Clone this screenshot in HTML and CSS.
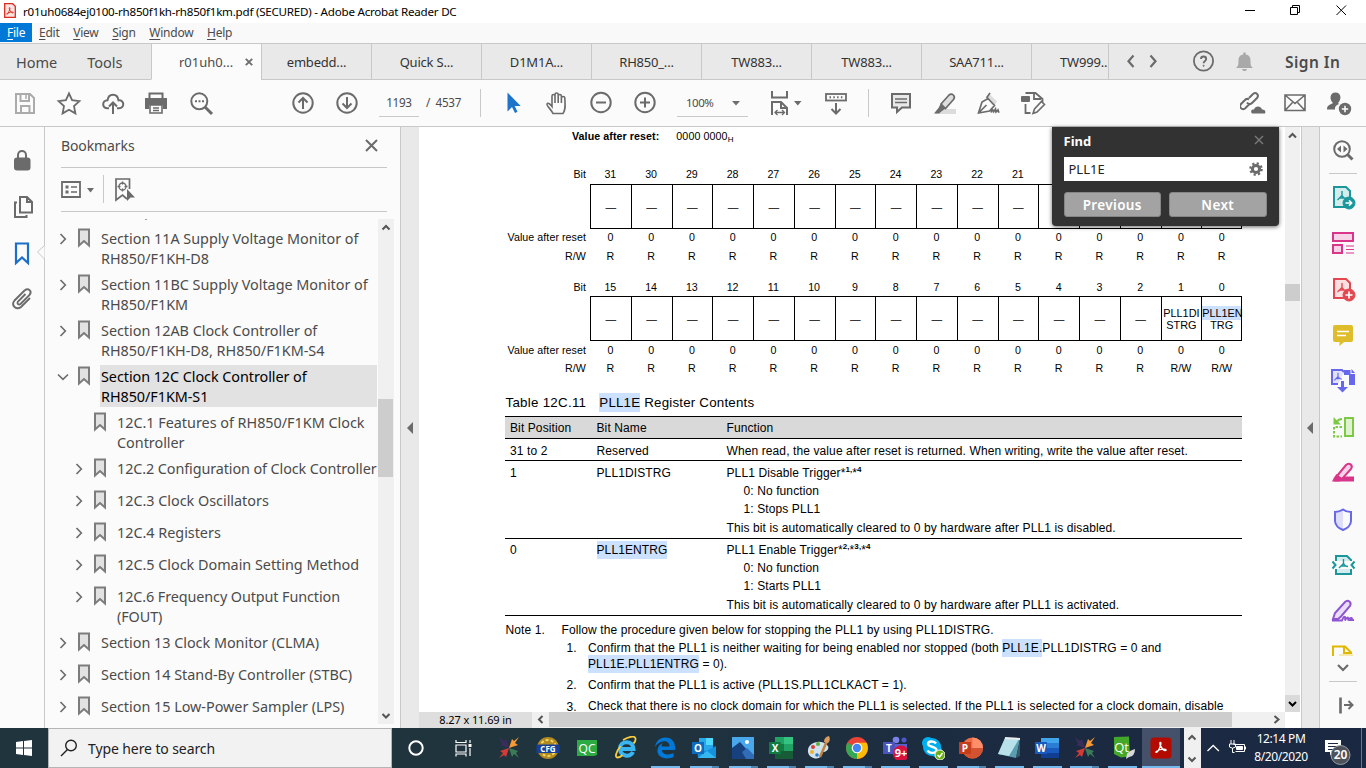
FILE: index.html
```html
<!DOCTYPE html>
<html lang="en">
<head>
<meta charset="utf-8">
<title>r01uh0684ej0100-rh850f1kh-rh850f1km.pdf (SECURED) - Adobe Acrobat Reader DC</title>
<link rel="stylesheet" href="styles.css">
</head>
<body>
<svg class="defs" width="0" height="0">
  <symbol id="mark" viewBox="0 0 14 20"><path d="M2 1.500h10v16l-5-4.500-5 4.500z" fill="#e2e2e2" stroke="#7c7c7c" stroke-width="2"/></symbol>
  <symbol id="right" viewBox="0 0 10 14"><path d="M2.500 2l4.800 5-4.800 5" fill="none" stroke="#6e6e6e" stroke-width="1.700"/></symbol>
  <symbol id="tri" viewBox="0 0 8 5"><path d="M0 0h8l-4 4.500z" fill="#6e6e6e"/></symbol>
  <symbol id="acro" viewBox="0 0 16 16"><path d="M7.500 2.500c-.9 0-.9 2 .1 4s3 4.500 5 4.700c1.300 0 1.300-1.500-1.600-1.500S4.500 11 3 12.300c-1 1.200.7 1.600 2.200-1.100S8.800 3 7.500 2.500z" fill="none" stroke="currentColor" stroke-width="1.500"/></symbol>
  <symbol id="tree3" viewBox="0 0 12 12"><path d="M6 1v4.500L1.500 10M6 5.500c1 2 2.500 3 4.500 3M3.500 8h4" fill="none" stroke="currentColor" stroke-width="1.400"/></symbol>
  <symbol id="burst" viewBox="0 0 24 24"><path d="M2 1l5 4 2-2 3 9-9-3 2-1z" fill="#3a2d5c"/><path d="M22 1l-4 6 3 2-9 3 3-9 2 2z" fill="#f79a35"/><path d="M2 22l4-5-3-2 9-3-3 9-2-2z" fill="#d33b35"/><path d="M22 22l-5-4-2 3-3-9 9 3-2 2z" fill="#3c7a58"/></symbol>
</svg>
<div class="app">
  <header class="titlebar">
    <svg class="app-ico" width="12" height="15" viewBox="0 0 12 15"><path d="M.7.700h8l2.600 2.600v11H.7z" fill="#fbe3e0" stroke="#d92b1e" stroke-width="1.300"/><svg x="1" y="3" width="10" height="10" viewBox="0 0 16 16"><use href="#acro" color="#d92b1e"/></svg></svg>
    <span class="title">r01uh0684ej0100-rh850f1kh-rh850f1km.pdf (SECURED) - Adobe Acrobat Reader DC</span>
    <svg class="winbtns" width="110" height="20" viewBox="0 0 110 20" fill="none" stroke="#000"><path d="M4 10.500h10M49.500 7.500h7v7h-7zM51.500 7.500v-2h7v7h-2M95.500 5.500l9.500 9.500M105 5.500L95.500 15"/></svg>
  </header>
  <nav class="menubar"><span class="on"><u>F</u>ile</span><span><u>E</u>dit</span><span><u>V</u>iew</span><span><u>S</u>ign</span><span><u>W</u>indow</span><span><u>H</u>elp</span></nav>
  <div class="tabs">
    <div class="tab-home"><span>Home</span><span>Tools</span></div>
    <div class="tab cur">r01uh0...<svg class="tab-x" width="8" height="8" viewBox="0 0 8 8"><path d="M.8.800l6.400 6.400M7.200.800L.8 7.200" stroke="#6e6e6e" stroke-width="1.900"/></svg></div>
    <div class="tab">embedd...</div><div class="tab">Quick S...</div><div class="tab">D1M1A...</div><div class="tab">RH850_...</div><div class="tab">TW883...</div><div class="tab">TW883...</div><div class="tab">SAA711...</div><div class="tab last">TW999...</div>
    <div class="tab-right">
      <svg width="146" height="34" viewBox="1109 44 146 34" fill="none" stroke="#6b6b6b" stroke-width="2.200"><path d="M1133.500 55.500l-5 5.700 5 5.700M1150.500 55.500l5 5.700-5 5.700"/><circle cx="1203.500" cy="61" r="9.600" stroke-width="1.800"/><path d="M1201 59c0-3.300 5.200-3.300 5.200 0 0 2-2.600 1.800-2.600 4.200" stroke-width="1.900"/><circle cx="1203.600" cy="65.800" r=".6" stroke-width="1"/><path d="M1236 68c2.500-2 2.500-4 2.500-7.500 0-4 2-5.500 4.800-6v-2h2.400v2c2.800.5 4.800 2 4.800 6 0 3.500 0 5.500 2.500 7.500zM1242 69h5c-.5 2.700-4.500 2.700-5 0z" fill="#a9a9a9" stroke="none"/></svg>
      <span class="signin">Sign In</span>
    </div>
  </div>
  <div class="toolbar">
    <svg class="tb1" width="380" height="46" viewBox="0 80 380 46" fill="none" stroke="#6b6b6b" stroke-width="2">
      <path d="M16 94h14l4 4v15H16zM20.500 94v7h8.500v-7M21 113v-7h8.500v7" stroke="#ababab"/><path d="M26 94.500v4.500" stroke="#ababab" stroke-width="1.500"/>
      <path d="M69 93.500l3.100 6.700 7.300.9-5.400 5 1.400 7.300-6.400-3.600-6.400 3.600 1.400-7.300-5.400-5 7.300-.9z" stroke-width="1.800"/>
      <path d="M109 108.300h-1.500c-6 0-5.500-8 0-8 1-7.500 10-7.500 11 0 6-1 6.500 8 .5 8H117M113 114v-11M109 106.500l4-4 4 4"/>
      <path d="M149.500 98v-4.500h13V98"/><path d="M145 98h22v11h-4v-4h-14v4h-4z" fill="#6b6b6b" stroke="none"/><path d="M150 105h12v8h-12zM153 108h6M153 110.500h6" stroke-width="1.600"/>
      <circle cx="199.300" cy="101.300" r="8" stroke-width="2"/><path d="M205 107l7 7" stroke-width="3"/><path d="M195 101.200h2M198.500 101.200h2M202 101.200h2"/>
      <circle cx="303" cy="103" r="9.700"/><path d="M303 109V98.500M298.500 102.500l4.500-4.500 4.500 4.500"/>
      <circle cx="347" cy="103" r="9.700"/><path d="M347 97v10.500M342.500 103.500l4.500 4.500 4.500-4.500"/>
    </svg>
    <div class="pageno"><span class="pn">1193</span><span class="pslash">/&nbsp; 4537</span></div>
    <svg class="tb2" width="189" height="46" viewBox="474 80 189 46" fill="none" stroke="#6b6b6b" stroke-width="2">
      <path d="M480.500 89v28" stroke="#c9c9c9" stroke-width="1"/>
      <path d="M507.500 92.500v19l4.500-4.500 3 6 2.500-1.300-2.800-5.700h6z" fill="#1d74c9" stroke="none"/>
      <path d="M553 113.500c-1-3-6.500-7.500-6-9.500 1-2 3.500.5 5 2.500v-10.500c0-2 3-2 3 0v-1.500c0-2 3.200-2 3.200 0V96c0-2 3.200-2 3.200 0v2c0-2 3.400-2 3.400 0 .4 7.500 1 12-1.800 15.500zM555 96v7M558.200 95v8M561.400 97v6" stroke-width="1.600"/>
      <circle cx="601" cy="102.500" r="9.700"/><path d="M596 102.500h10"/>
      <circle cx="645" cy="102.500" r="9.700"/><path d="M640 102.500h10M645 97.500v10"/>
    </svg>
    <div class="zoom"><span>100%</span><svg width="8" height="5"><use href="#tri"/></svg></div>
    <svg class="tb3" width="300" height="46" viewBox="760 80 300 46" fill="none" stroke="#6b6b6b" stroke-width="2">
      <path d="M772 91v6.500h15V91M772 115v-13h9l6 6v7M781 102v6h6"/><path d="M775 112.500h9M777.500 110l-2.500 2.500 2.500 2.500M782 110l2.500 2.500-2.500 2.500" stroke-width="1.300"/>
      <path d="M794 101h7.500l-3.700 4.500z" fill="#6b6b6b" stroke="none"/>
      <rect x="826" y="94" width="20" height="6.500" stroke-width="1.800"/><path d="M829.500 97.300h13" stroke-dasharray="1.500 2.300"/><path d="M836 103v9.500M831.500 109l4.500 4.500 4.500-4.500"/>
      <path d="M868.500 89v28" stroke="#c9c9c9" stroke-width="1"/>
      <path d="M892 94h18v13.500h-8l-5 4.500v-4.500h-5z" fill="#e8e8e8"/><path d="M895 99h12M895 102.500h12" stroke-width="1.300"/>
      <path d="M939 109h17v5h-20z" fill="#dcdcdc" stroke="none"/><path d="M941 104l8-9c3-2.500 7 1 4.500 4.500l-8 9z" fill="#dedede" stroke-width="1.700"/><path d="M940.500 104l5 4.500-3.500 2.500-3 2.500h-5l2-2.500 2.500-3z" fill="#6b6b6b" stroke="none"/>
      <path d="M987 98.500l3-4 7 7-2.500 4z" fill="#dedede" stroke="none"/><path d="M978.500 113l3.500-11 6-3.500 6.500 7-5 5.500zM978.500 113l8-8M986.500 98l3.500-5M991 112.500c2-6 2-1 2.500-.5l2-3 .5 3 2-2 .5 2h1" stroke-width="1.700"/>
      <path d="M1025.500 93h10l7 6v3M1034 93v6h7M1025.500 104v9h5" stroke-width="1.800"/><rect x="1021" y="96" width="9" height="6" rx="1" fill="#6b6b6b" stroke="none"/><path d="M1033 113.500l1.500-4.500 7-7.500 3 3-7.500 7.500z" stroke-width="1.600"/>
    </svg>
    <svg class="tb4" width="126" height="46" viewBox="1240 80 126 46" fill="none" stroke="#6b6b6b" stroke-width="2">
      <path d="M1249 98l4-4c3-2.500 6.500 1 4 4l-5 5c-2 2-4 1-5-.500M1249 99.500c-1.500-1-3-.5-4 .5l-4 4c-2.500 3 1 6.500 4 4.500l4-4"/><path d="M1252 113.500c-2-3 0-4.500 2-4 1-4 7-4 8 0 3-.5 4 2 3 4z" fill="#6b6b6b" stroke="none"/>
      <path d="M1285 95h20v15.500h-20zM1285 95l10 8.500 10-8.500M1285 110.500l7.500-8M1305 110.500l-7.500-8" stroke-width="1.600"/>
      <path d="M1327 109.500c0-5 4-5 6-6.500-4-4-3-10.500 2.500-10.500s6.500 6.500 2.500 10.500l1 1c-3 1-4.500 3-4 5.500z" fill="#6b6b6b" stroke="none"/><circle cx="1345" cy="109" r="6.200" fill="#6b6b6b" stroke="none"/><path d="M1341.800 109h6.400M1345 105.800v6.400" stroke="#fff" stroke-width="1.500"/>
    </svg>
  </div>
  <main class="main">
    <aside class="rail">
      <svg width="51" height="200" viewBox="0 127 51 200" fill="none" stroke="#6b6b6b" stroke-width="2">
        <path d="M18 159v-4c0-5.500 8-5.500 8 0v4"/><rect x="14" y="157.500" width="16.500" height="13" rx="3" fill="#6b6b6b" stroke="none"/>
        <path d="M20 197h7l5 5v10.500H20zM27 197v5h5M17 202.500h-2V217h11.500v-2"/>
        <path d="M16 243.500h12v19.500l-6-5.500-6 5.500z" stroke="#1c6fc8" stroke-width="2.200"/>
        <path d="M44.500 245.500l-7 6.500 7 7" fill="#fbfbfb" stroke="#c8c8c8" stroke-width="1"/>
        <path d="M25.500 294l-7.500 7.500c-1.500 2 .500 4 2.500 2.500l9-9c3-4-1-7.500-5-4.500l-10 10c-4 5 2 10 6.500 6.500l9-9" stroke-width="1.900"/>
      </svg>
    </aside>
    <section class="bookmarks">
      <div class="bm-head"><span>Bookmarks</span><svg width="13" height="13" viewBox="0 0 13 13"><path d="M1 1l11 11M12 1L1 12" stroke="#6b6b6b" stroke-width="2"/></svg></div>
      <div class="bm-tools">
        <svg width="76" height="40" viewBox="61 168 76 40" fill="none" stroke="#6b6b6b" stroke-width="2"><path d="M62 182h18v15H62z" stroke-width="1.800"/><path d="M65.500 187h3M65.500 192h3" stroke-width="3"/><path d="M71 187h6M71 192h6" stroke-width="1.700"/><path d="M87 188h7l-3.500 4.500z" fill="#6b6b6b" stroke="none"/><path d="M103.500 175v28" stroke="#c9c9c9" stroke-width="1"/><path d="M127 199l-4.500-4-6.500 5v-21h13.500v10" stroke-width="1.700"/><circle cx="122.500" cy="186.500" r="3.500" stroke-width="1.300"/><path d="M122.500 181.500v3M122.500 188.500v3M117.500 186.500h3M124.500 186.500h3" stroke-width="1.300"/><path d="M127 189v12l3.500-3.500h4.500z" fill="#6b6b6b" stroke="none"/></svg>
      </div>
      <div class="bm-body">
        <div class="tree">
          <i class="speck"></i>
          <div class="node"><svg class="ar"><use href="#right"/></svg><svg class="mk"><use href="#mark"/></svg><p>Section 11A Supply Voltage Monitor of<br>RH850/F1KH-D8</p></div>
          <div class="node"><svg class="ar"><use href="#right"/></svg><svg class="mk"><use href="#mark"/></svg><p>Section 11BC Supply Voltage Monitor of<br>RH850/F1KM</p></div>
          <div class="node"><svg class="ar"><use href="#right"/></svg><svg class="mk"><use href="#mark"/></svg><p>Section 12AB Clock Controller of<br>RH850/F1KH-D8, RH850/F1KM-S4</p></div>
          <div class="node sel"><svg class="ar down"><use href="#right"/></svg><svg class="mk"><use href="#mark"/></svg><p>Section 12C Clock Controller of<br>RH850/F1KM-S1</p></div>
          <div class="node sub"><svg class="ar"></svg><svg class="mk"><use href="#mark"/></svg><p>12C.1 Features of RH850/F1KM Clock<br>Controller</p></div>
          <div class="node sub"><svg class="ar"><use href="#right"/></svg><svg class="mk"><use href="#mark"/></svg><p class="tight">12C.2 Configuration of Clock Controller</p></div>
          <div class="node sub"><svg class="ar"><use href="#right"/></svg><svg class="mk"><use href="#mark"/></svg><p>12C.3 Clock Oscillators</p></div>
          <div class="node sub"><svg class="ar"><use href="#right"/></svg><svg class="mk"><use href="#mark"/></svg><p>12C.4 Registers</p></div>
          <div class="node sub"><svg class="ar"><use href="#right"/></svg><svg class="mk"><use href="#mark"/></svg><p>12C.5 Clock Domain Setting Method</p></div>
          <div class="node sub"><svg class="ar"><use href="#right"/></svg><svg class="mk"><use href="#mark"/></svg><p class="tight">12C.6 Frequency Output Function<br>(FOUT)</p></div>
          <div class="node"><svg class="ar"><use href="#right"/></svg><svg class="mk"><use href="#mark"/></svg><p>Section 13 Clock Monitor (CLMA)</p></div>
          <div class="node"><svg class="ar"><use href="#right"/></svg><svg class="mk"><use href="#mark"/></svg><p>Section 14 Stand-By Controller (STBC)</p></div>
          <div class="node"><svg class="ar"><use href="#right"/></svg><svg class="mk"><use href="#mark"/></svg><p>Section 15 Low-Power Sampler (LPS)</p></div>
        </div>
        <div class="bm-scroll"><svg width="16" height="16"><path d="M4.500 10.500L8 7l3.500 3.500" class="sa"/></svg><i class="bm-thumb"></i><svg width="16" height="16"><path d="M4.500 6L8 9.500 11.500 6" class="sa"/></svg></div>
      </div>
    </section>
    <div class="split"><svg width="6" height="12"><path d="M6 0v12L0 6z" fill="#6b6b6b"/></svg></div>
    <section class="docwrap">
      <div class="docrow">
        <div class="doc">
          <div class="reset"><b>Value after reset:</b><span>0000 0000<small>H</small></span></div>
          <div class="bits num"><em>Bit</em><span>31</span><span>30</span><span>29</span><span>28</span><span>27</span><span>26</span><span>25</span><span>24</span><span>23</span><span>22</span><span>21</span></div>
          <div class="bits box"><em></em><span>—</span><span>—</span><span>—</span><span>—</span><span>—</span><span>—</span><span>—</span><span>—</span><span>—</span><span>—</span><span>—</span><span></span><span></span><span></span><span></span><span></span></div>
          <div class="bits val"><em>Value after reset</em><span>0</span><span>0</span><span>0</span><span>0</span><span>0</span><span>0</span><span>0</span><span>0</span><span>0</span><span>0</span><span>0</span><span>0</span><span>0</span><span>0</span><span>0</span><span>0</span></div>
          <div class="bits rw"><em>R/W</em><span>R</span><span>R</span><span>R</span><span>R</span><span>R</span><span>R</span><span>R</span><span>R</span><span>R</span><span>R</span><span>R</span><span>R</span><span>R</span><span>R</span><span>R</span><span>R</span></div>
          <div class="bits num two"><em>Bit</em><span>15</span><span>14</span><span>13</span><span>12</span><span>11</span><span>10</span><span>9</span><span>8</span><span>7</span><span>6</span><span>5</span><span>4</span><span>3</span><span>2</span><span>1</span><span>0</span></div>
          <div class="bits box"><em></em><span>—</span><span>—</span><span>—</span><span>—</span><span>—</span><span>—</span><span>—</span><span>—</span><span>—</span><span>—</span><span>—</span><span>—</span><span>—</span><span>—</span><span class="nm"><i>PLL1DI</i><i>STRG</i></span><span class="nm"><i class="hl">PLL1EN</i><i>TRG</i></span></div>
          <div class="bits val two"><em>Value after reset</em><span>0</span><span>0</span><span>0</span><span>0</span><span>0</span><span>0</span><span>0</span><span>0</span><span>0</span><span>0</span><span>0</span><span>0</span><span>0</span><span>0</span><span>0</span><span>0</span></div>
          <div class="bits rw two"><em>R/W</em><span>R</span><span>R</span><span>R</span><span>R</span><span>R</span><span>R</span><span>R</span><span>R</span><span>R</span><span>R</span><span>R</span><span>R</span><span>R</span><span>R</span><span>R/W</span><span>R/W</span></div>
          <h2 class="caption"><span>Table 12C.11</span><span><mark>PLL1E</mark> Register Contents</span></h2>
          <div class="reg">
            <div class="r head"><span>Bit Position</span><span>Bit Name</span><span>Function</span></div>
            <div class="r one"><span>31 to 2</span><span>Reserved</span><span>When read, the value after reset is returned. When writing, write the value after reset.</span></div>
            <div class="r big"><span>1</span><span>PLL1DISTRG</span><div><p>PLL1 Disable Trigger*<sup>1</sup><sup>,</sup>*<sup>4</sup></p><p class="in">0: No function</p><p class="in">1: Stops PLL1</p><p class="end">This bit is automatically cleared to 0 by hardware after PLL1 is disabled.</p></div></div>
            <div class="r big last"><span>0</span><span><mark class="name">PLL1ENTRG</mark></span><div><p>PLL1 Enable Trigger*<sup>2,</sup>*<sup>3,</sup>*<sup>4</sup></p><p class="in">0: No function</p><p class="in">1: Starts PLL1</p><p class="end">This bit is automatically cleared to 0 by hardware after PLL1 is activated.</p></div></div>
          </div>
          <div class="notes">
            <div class="nt"><span>Note 1.</span><span>Follow the procedure given below for stopping the PLL1 by using PLL1DISTRG.</span></div>
            <div class="st"><span>1.</span><p>Confirm that the PLL1 is neither waiting for being enabled nor stopped (both <mark>PLL1E.</mark>PLL1DISTRG = 0 and<br><mark>PLL1E.PLL1ENTRG</mark> = 0).</p></div>
            <div class="st"><span>2.</span><p>Confirm that the PLL1 is active (PLL1S.PLL1CLKACT = 1).</p></div>
            <div class="st"><span class="lo">3.</span><p>Check that there is no clock domain for which the PLL1 is selected. If the PLL1 is selected for a clock domain, disable</p></div>
          </div>
        </div>
        <div class="vscroll"><svg width="15" height="17"><path d="M4 10.500L7.500 7l3.500 3.500" class="sa"/></svg><i class="vthumb"></i><svg class="dn" width="15" height="17"><path d="M4 7l3.500 3.500L11 7" class="sa dark"/></svg></div>
      </div>
      <div class="hscroll"><span class="size">8.27 x 11.69 in</span><svg width="17" height="15"><path d="M10.500 4L7 7.500l3.500 3.500" class="sa"/></svg><i class="hthumb"></i><svg class="hr" width="17" height="15"><path d="M6.500 4l4 3.500-4 3.500" class="sa"/></svg></div>
      <div class="find">
        <div class="f-top"><b>Find</b><svg width="10" height="10" viewBox="0 0 10 10"><path d="M1 1l8 8M9 1L1 9" stroke="#777" stroke-width="1.500"/></svg></div>
        <div class="f-in"><span>PLL1E</span><svg width="14" height="14" viewBox="0 0 14 14" fill="none" stroke="#6b6b6b"><circle cx="7" cy="7" r="3.600" stroke-width="3"/><circle cx="7" cy="7" r="5.700" stroke-width="2.200" stroke-dasharray="2.200 2.270"/></svg></div>
        <div class="f-btns"><span>Previous</span><span>Next</span></div>
      </div>
    </section>
    <div class="split right"><svg width="6" height="12"><path d="M6 0v12L0 6z" fill="#6b6b6b"/></svg></div>
    <aside class="tools">
      <svg width="46" height="601" viewBox="1320 127 46 601" fill="none" stroke-width="2">
        <g stroke="#6b6b6b"><circle cx="1342" cy="149" r="7.800"/><path d="M1347.500 154.500l5 5" stroke-width="3"/><path d="M1341 145.500v7l-4-3.500zM1343.500 145.500v7l4-3.500z" fill="#6b6b6b" stroke="none"/></g>
        <path d="M1329 173.500h28M1329 681.500h28" stroke="#c8c8c8" stroke-width="1"/>
        <g stroke="#1b979c" color="#1b979c"><path d="M1334 187h12l4 4v16h-16z" fill="#d5eced"/><svg x="1336" y="190" width="12" height="12"><use href="#tree3"/></svg><circle cx="1349" cy="203" r="6" fill="#1b979c" stroke="#1b979c" stroke-width="1"/><path d="M1345.500 203h6M1349 200.300l2.700 2.700-2.700 2.700" stroke="#fff" stroke-width="1.500"/></g>
        <g stroke="#d9368b"><path d="M1333 233h20v8h-20zM1333 245h9v8h-9z" fill="#f6d3e6"/><path d="M1346 246h8M1346 249.500h8M1346 253h8" stroke-width="1.200"/></g>
        <g stroke="#e34850" color="#e34850"><path d="M1334 279h12l4 4v15h-16z" fill="#fae0e1"/><svg x="1336" y="282" width="12" height="12"><use href="#tree3"/></svg><circle cx="1349" cy="295" r="6" fill="#e34850" stroke-width="1"/><path d="M1345.500 295h7M1349 291.500v7" stroke="#fff" stroke-width="1.700"/></g>
        <path d="M1333 327q0-2 2-2h16q2 0 2 2v13q0 2-2 2h-7l-4.500 4v-4h-4.500q-2 0-2-2z" fill="#dfbc29"/><path d="M1337 331.500h12M1337 335.500h9" stroke="#fff" stroke-width="1.500"/>
        <g stroke="#6767ec" color="#6767ec"><path d="M1338 384h-6v-14h10l2 2" fill="#e1e1fb"/><path d="M1344 370h6.500v4h4.500v11h-6v-10h-5zM1351.500 369l3.500 4h-3.500z" fill="#6767ec" stroke="none"/><svg x="1333" y="372" width="10" height="10" viewBox="0 0 12 12"><use href="#tree3" width="12" height="12"/></svg><path d="M1342.500 381v9" stroke-width="3"/><path d="M1337 387h11l-5.500 5.500z" fill="#6767ec" stroke="none"/></g>
        <g stroke="#7cc943"><path d="M1345 418h8v18h-8z" fill="#e1f2d3"/><path d="M1342 427h-8v9.500h8" stroke-dasharray="2.500 1.500"/><path d="M1333.500 417v7.500h7.500z" fill="#7cc943" stroke="none"/><path d="M1336.500 422q2-3 5.500-3"/></g>
        <g stroke="#d9368b"><path d="M1339 476.500h15v5h-20z" fill="#d9368b" stroke="none"/><path d="M1337 476l9-11c3-3 7.500 0 5 4l-9 10z" fill="#f6d3e6"/><path d="M1336.500 474l6 5-3 2.500H1332l2-4z" fill="#d9368b" stroke="none"/></g>
        <g stroke="#6767ec"><path d="M1343 509.500c-3 2.500-5.500 2.500-8 2.500v9c0 4 4 7.500 8 9z" fill="#dedefa" stroke="none"/><path d="M1343 509.500c-3 2-5.500 2.500-8 2.500v9c0 4 4 7.500 8 9 4-1.500 8-5 8-9v-9c-3 0-5.500-.5-8-2.500z"/></g>
        <g stroke="#1b979c" color="#1b979c"><path d="M1336 561v-5h11l4 4v1M1336 569v5h15v-5" fill="#d5eced"/><svg x="1337.500" y="558" width="12" height="12"><use href="#tree3"/></svg><path d="M1332.500 561.500l3 3.500-3 3.500M1354.500 561.500l-3 3.500 3 3.500"/></g>
        <g stroke="#9055d3"><path d="M1333 619l2-6 10-11c3-3 7 .500 5 4l-9 10.500-3 2.500z" fill="#e9def7"/><path d="M1332 620.500h10c2-5 4-5 3 0 2-4 4-4 3 0 1-2 4-4 4-1.500l-1 1h3" stroke-width="1.900"/></g>
        <g stroke="#e0b800"><path d="M1333 656v-9.500h12l6 6v3.500M1344 647v6h6"/><path d="M1339 655h14" stroke="#f5e9ad"/></g>
        <path d="M1338 665l5 5 5-5" stroke="#6b6b6b" stroke-width="2.200"/>
        <g stroke="#6b6b6b"><path d="M1340.500 697.500v16" stroke-width="2.600"/><path d="M1344 705h8M1348.500 701l4 4-4 4"/></g>
      </svg>
    </aside>
  </main>
  <footer class="taskbar">
    <div class="start"><svg width="16" height="16" viewBox="0 0 16 16" fill="#fff"><path d="M0 2l7-1v6.500H0zM8 .9L16 0v7.500H8zM0 8.500h7V15l-7-1zM8 8.500h8V16l-8-1z"/></svg></div>
    <div class="search"><svg width="18" height="18" viewBox="0 0 18 18" fill="none" stroke="#222" stroke-width="1.400"><circle cx="11" cy="6.500" r="5.300"/><path d="M7.500 10.500L1 17"/></svg><span>Type here to search</span></div>
    <div class="apps">
      <div class="wide"><svg viewBox="0 0 24 24"><circle cx="12" cy="12" r="6.700" fill="none" stroke="#fff" stroke-width="2"/></svg></div>
      <div class="wide b"><svg viewBox="0 0 24 24" fill="none" stroke="#fff" stroke-width="1.200"><path d="M4 9h10v7H4zM4 4v2.500h10V4M4 20.500V18h10v2.500M18 4v3M18 12v8"/><path d="M16.500 9.500h3" stroke-width="3"/></svg></div>
      <div><svg viewBox="0 0 24 24"><use href="#burst"/></svg></div>
      <div><svg viewBox="0 0 24 24"><circle cx="12" cy="12" r="11" fill="#b18a22"/><circle cx="12" cy="12" r="8" fill="none" stroke="#f3d662" stroke-width="2" stroke-dasharray="3 2"/><path d="M.5 8.500h23v8.500H.5z" fill="#173f98"/><text x="12" y="15.500" class="cfg">CFG</text></svg></div>
      <div><svg viewBox="0 0 24 24"><path d="M2 4h20v15l-3 1H2z" fill="#2dab43"/><text x="12" y="16.500" class="qc">QC</text></svg></div>
      <div><svg viewBox="0 0 24 24" fill="none"><path d="M19 16c-2.500 6-13 4.500-13-3.500s13-9 13.500.5H8" stroke="#39b5f2" stroke-width="4"/><path d="M9 4c5-3 12-5 12.500-1.500.3 2-1 4-2 5M6.500 10C2 16 .5 21.500 3.500 21.500c2 0 4-1.500 5-2.500" stroke="#f6cd3f" stroke-width="1.800"/></svg></div>
      <div class="run"><svg viewBox="0 0 24 24"><path d="M2 11C4-2 22-1 22 11v3H9c0 5 7 5.500 11.500 3v4C11 25 2 20 5 12c1-3 3-4 5-5-1.300 1.300-1.500 2-1.500 3.500h8C16.500 3 6 4 2 11z" fill="#0078d7"/></svg></div>
      <div class="run m"><svg viewBox="0 0 24 24"><path d="M7 2h14v14H7z" fill="#28a8ea"/><path d="M14 2h7v7h-7z" fill="#50d9ff"/><path d="M5 11l9 4 10-5v12H6z" fill="#1490df"/><path d="M6 22l9-7 9 7z" fill="#35b8f1"/><path d="M0 6h12v12H0z" fill="#0f6cbd"/><text x="6" y="15.500" class="lt">O</text></svg></div>
      <div class="run m"><svg viewBox="0 0 24 24"><path d="M1 1h22v22H1z" fill="#49a8eb"/><path d="M1 12l8-6 14 16v1H1z" fill="#17407e"/><path d="M11 16l5-4 7 7v4h-8z" fill="#306cb7"/><circle cx="16" cy="6" r="2" fill="#fff"/></svg></div>
      <div class="run m n"><svg viewBox="0 0 24 24"><path d="M6 1h18v22H6z" fill="#21a366"/><path d="M15 1h9v7h-9z" fill="#33c481"/><path d="M6 8h9v7H6z" fill="#107c41"/><path d="M6 15h18v8H6z" fill="#185c37"/><path d="M0 6h12v12H0z" fill="#107c41"/><text x="6" y="15.500" class="lt">X</text></svg></div>
      <div class="run m n"><svg viewBox="0 0 24 24"><path d="M1 16C0 7 12 3 19 8c5 4 1 7-2 8-2 0-3 0-3 3-1 6-12 4-13-3z" fill="#cfe2ee"/><circle cx="6" cy="11" r="2" fill="#dc3d35"/><circle cx="11" cy="8" r="2" fill="#60ad3b"/><circle cx="5" cy="16" r="2" fill="#edb32c"/><circle cx="10" cy="19" r="1.800" fill="#2a77c9"/><path d="M20 5l-7 16" stroke="#c2813d" stroke-width="2.500"/><path d="M17 6q0-5 5-6 2 4-1 7z" fill="#dc9e60"/></svg></div>
      <div class="run n m"><svg viewBox="0 0 24 24"><circle cx="12" cy="12" r="11" fill="#ea4335"/><path d="M12 12L2.500 6.500A11 11 0 0 0 12 23l5-8z" fill="#34a853"/><path d="M12 12v11a11 11 0 0 0 9.600-16.200H12z" fill="#fbbc05"/><circle cx="12" cy="12" r="5.300" fill="#fff"/><circle cx="12" cy="12" r="4.200" fill="#4285f4"/></svg></div>
      <div class="run n"><svg viewBox="0 0 24 24"><circle cx="13" cy="4" r="3.300" fill="#7b83eb"/><circle cx="21" cy="4" r="2.500" fill="#5059c9"/><path d="M9 8h15v8c0 5-12 8-15 1z" fill="#5961cd"/><path d="M0 6h12v12H0z" fill="#4b53bc"/><text x="6" y="15.500" class="lt">T</text><circle cx="18" cy="17.500" r="8" fill="#d5133e"/><text x="18" y="21" class="nine">9+</text></svg></div>
      <div class="run n"><svg viewBox="0 0 24 24"><circle cx="11" cy="11" r="9" fill="#00aff0"/><circle cx="7" cy="7" r="6" fill="#00aff0"/><circle cx="15" cy="15" r="6" fill="#00aff0"/><path d="M15 7.500C13 4.500 7 5 7 8s8.500 2.500 8.500 6-7 4-9 .5" fill="none" stroke="#fff" stroke-width="2.400"/><circle cx="19" cy="19" r="5" fill="#68ad12" stroke="#e9f5e0"/><path d="M16.500 19l2 2 3-4" fill="none" stroke="#fff" stroke-width="1.500"/></svg></div>
      <div class="run n m"><svg viewBox="0 0 24 24"><circle cx="13.500" cy="12" r="10.500" fill="#ed6c47"/><path d="M13.500 1.500A10.500 10.500 0 0 1 24 12H13.500z" fill="#ff8f6b"/><path d="M3 12h21a10.500 10.500 0 0 1-21 0z" fill="#d35230"/><path d="M0 6h12v12H0z" fill="#c43e1c"/><text x="6" y="15.500" class="lt">P</text></svg></div>
      <div class="run n"><svg viewBox="0 0 24 24"><path d="M8 2l15 1-4 19L1 18z" fill="#5a9daf"/><path d="M8 2l14 1-10 17L1 18z" fill="#b9e1e9"/><path d="M8 2l15 1" stroke="#eee" stroke-width="2"/><path d="M19 22l4-2V4z" fill="#365a6a"/></svg></div>
      <div class="run n"><svg viewBox="0 0 24 24"><path d="M6 2h18v20H6z" fill="#2b7cd3"/><path d="M6 2h18v5H6z" fill="#41a5ee"/><path d="M6 12h18v5H6z" fill="#185abd"/><path d="M6 17h18v5H6z" fill="#103f91"/><path d="M0 6h12v12H0z" fill="#185abd"/><text x="6" y="15.500" class="lt">W</text></svg></div>
      <div class="run n m"><svg viewBox="0 0 24 24"><use href="#burst"/></svg></div>
      <div class="run n"><svg viewBox="0 0 24 24"><path d="M3 1l15-.5 1 20-9 1L3 18z" fill="#43a72a"/><text x="10.500" y="15.500" class="qt">Qt</text><path d="M15 23q0-8 9-10 0 7-6 8z" fill="#d9d9d9"/></svg></div>
      <div class="run n active"><svg viewBox="0 0 24 24"><rect x="1.500" y="1.500" width="21" height="21" rx="3.500" fill="#b30b00"/><svg x="4.500" y="4" width="15" height="15" viewBox="0 0 16 16"><use href="#acro" color="#fff"/></svg></svg></div>
    </div>
    <div class="tscroll"><svg width="16" height="40"><path d="M4.500 11.500L8 8l3.500 3.500M4.500 29.500L8 33l3.500-3.500" class="sa"/></svg></div>
    <svg class="tray" width="50" height="40" viewBox="1201 728 50 40" fill="none" stroke="#fff"><path d="M1207.500 751l5.700-5.500 5.700 5.500" stroke-width="1.300"/><path d="M1233.500 744.500h11v7h-9M1245.500 746.500v3M1231 740v4M1234 740v4M1229.500 744h6v3q-3 2.500-6 0zM1232.500 748v4.500h2"/><path d="M1236.500 746.500h6v3h-6z" fill="#fff"/></svg>
    <div class="clock"><span>12:14 PM</span><span>8/20/2020</span></div>
    <svg class="notif" width="36" height="40" viewBox="1320 728 36 40"><path d="M1325 740h16v12h-7l-4 3.500V752h-5z" fill="#fff"/><path d="M1328 743.500h10M1328 746.500h10M1328 749.500h7" stroke="#1b2a40"/><circle cx="1340.500" cy="755" r="9.500" fill="#4e525a" stroke="#999fa5"/><text x="1340.500" y="759.300" class="n20">20</text></svg>
    <i class="peek"></i>
  </footer>
</div>
</body>
</html>
```
FILE: styles.css
```css
* { box-sizing: border-box; }
body { margin: 0; overflow: hidden; background: #fff; font-family: "Noto Sans", "Open Sans", sans-serif; color: #4b4b4b; }
p, h2 { margin: 0; }
i, em { font-style: normal; }
svg { flex: none; display: block; }
.defs { position: absolute; }
.app { width: 1366px; height: 768px; display: flex; flex-direction: column; overflow: hidden; }
.sa { fill: none; stroke: #555; stroke-width: 2; }
.sa.dark { stroke: #000; }

.titlebar { height: 23px; display: flex; align-items: center; padding-left: 4px; background: #fff; color: #000; }
.title { font-size: 11.600px; margin-left: 7px; letter-spacing: -.23px; white-space: nowrap; line-height: 22px; }
.app-ico { margin-top: -3px; }
.winbtns { margin-left: auto; margin-right: 15px; margin-top: -3px; }
.menubar { height: 20px; display: flex; background: #f9f9f9; font-size: 12px; line-height: 20px; letter-spacing: -.25px; gap: 13.700px; }
.menubar .on { width: 32px; height: 19px; margin-right: -6.700px; padding-left: 7px; background: #0078d7; color: #fff; }
.menubar u { text-underline-offset: 2px; }

.tabs { height: 37px; display: flex; background: #e9e9e9; border-top: 1px solid #c8c8c8; line-height: 36px; }
.tab-home { width: 151px; padding-left: 16px; display: flex; gap: 30px; font-size: 14.500px; border-bottom: 1px solid #c8c8c8; }
.tab { width: 110px; border-left: 1px solid #c8c8c8; border-bottom: 1px solid #c8c8c8; text-align: center; font-size: 13px; color: #333; letter-spacing: -.2px; }
.tab.cur { background: #fbfbfb; border-bottom-color: #fbfbfb; display: flex; align-items: center; padding-left: 27px; color: #4b4b4b; letter-spacing: 0; }
.tab-x { margin-left: auto; margin-right: 8px; }
.tab.last { width: 77px; text-align: left; padding-left: 28px; overflow: hidden; white-space: nowrap; }
.tab-right { flex: 1; display: flex; border-left: 1px solid #c8c8c8; border-bottom: 1px solid #c8c8c8; }
.signin { font-size: 15.500px; font-weight: 600; margin-left: 30px; letter-spacing: .45px; }

.toolbar { height: 47px; display: flex; background: #fbfbfb; border-bottom: 1px solid #c8c8c8; }
.pageno { width: 94px; display: flex; font-size: 11.700px; letter-spacing: -.3px; }
.pn { width: 40px; height: 37px; margin-left: -1px; border-bottom: 1px solid #c9c9c9; text-align: center; line-height: 45px; }
.pslash { line-height: 45px; margin-left: 7px; white-space: nowrap; }
.zoom { width: 71px; height: 37px; margin-left: 14px; padding: 0 8px 0 9px; display: flex; align-items: center; justify-content: space-between; border-bottom: 1px solid #c9c9c9; font-size: 11.500px; letter-spacing: -.5px; }
.zoom span { line-height: 45px; margin-top: 8px; }
.zoom svg { margin-top: 10px; }
.tb3 { margin-left: 12px; }
.tb4 { margin-left: auto; }

.main { height: 601px; display: flex; }
.rail { width: 45px; background: #fbfbfb; border-right: 1px solid #c8c8c8; position: relative; z-index: 1; }
.bookmarks { width: 355px; padding: 0 6px 0 16px; background: #fbfbfb; }
.bm-head { height: 41px; width: 326px; display: flex; align-items: center; justify-content: space-between; padding: 0 9px 3px 0; border-bottom: 1px solid #c8c8c8; font-size: 14px; letter-spacing: -.1px; }
.bm-tools { height: 44px; width: 326px; border-bottom: 1px solid #c8c8c8; }
.bm-body { display: flex; height: 509px; margin-top: 7px; margin-left: -4px; justify-content: space-between; }
.tree { width: 320px; overflow: hidden; }
.speck { display: block; width: 2px; height: 1px; margin: 0 0 7px 88px; background: #999; }
.node { display: flex; min-height: 32px; }
.node p { width: 277px; margin-left: 9px; padding: 2px 0 0 1px; font-size: 14.400px; line-height: 20px; white-space: nowrap; letter-spacing: -.02px; }
.node p.tight { letter-spacing: -.1px; }
.node.sel p { background: #e2e2e2; color: #000; letter-spacing: -.06px; }
.node:has(br) { height: 46px; }
.node:has(br) p { height: 42px; }
.sub { padding-left: 16px; }
.ar { width: 10px; height: 14px; margin: 5px 9px 0 1px; }
.ar.down { transform: rotate(90deg); }
.mk { width: 14px; height: 20px; margin-top: 1px; }
.bm-scroll { width: 16px; height: 505px; background: #f0f0f0; display: flex; flex-direction: column; }
.bm-thumb { height: 78px; width: 15px; margin: 164px 0 auto; background: #cdcdcd; }
.split { width: 19px; border-left: 1px solid #c8c8c8; background: #e9e9e9; padding: 295px 0 0 6px; }
.split.right { width: 19px; border-right: 1px solid #c8c8c8; padding-left: 5px; }

.docwrap { width: 882px; position: relative; background: #fff; }
.docrow { display: flex; height: 585px; }
.doc { width: 866px; overflow: hidden; font-family: "Liberation Sans", Arial, sans-serif; color: #000; font-size: 12px; white-space: nowrap; letter-spacing: .105px; }
.reset { display: flex; height: 38px; padding-left: 153px; gap: 17px; font-size: 10.670px; line-height: 18px; }
.reset b { letter-spacing: .08px; }
.reset small { font-size: 8px; position: relative; top: 2px; }
.bits { display: grid; grid-template-columns: 171px repeat(16, 40.750px); font-size: 10.670px; text-align: center; letter-spacing: .06px; }
.bits em { text-align: right; padding-right: 4px; }
.num { height: 19px; line-height: 19px; }
.num.two { height: 31px; padding-top: 13px; line-height: 18px; }
.box span { height: 45px; border: solid #000; border-width: 1px 0 1px 1px; line-height: 44px; display: flex; flex-direction: column; align-items: center; }
.box span:last-child { border-right-width: 1px; }
.box .nm { line-height: 12px; padding-top: 10px; font-size: 10.900px; letter-spacing: 0; }
.box .nm i { width: 39px; }
.val { height: 17px; line-height: 17px; }
.rw { height: 19px; line-height: 20px; }
.val.two, .rw.two { height: 18px; line-height: 18px; }
mark, .hl { background: #cce1ff; color: inherit; }
.box .nm .hl { padding-top: 1px; height: 14px; margin-top: -1px; margin-bottom: -1px; }
.caption { display: flex; height: 39px; padding: 15px 0 0 86.500px; gap: 13px; font-size: 13.330px; font-weight: 400; line-height: 22px; letter-spacing: .27px; }
.caption mark { padding: 2px 0; }
.caption span + span { letter-spacing: .2px; }
.reg { width: 737px; margin-left: 86px; }
.r { display: grid; grid-template-columns: 86.500px 130px 1fr; padding-left: 5px; border-bottom: 1px solid #000; line-height: 22px; }
.r.head { height: 23px; background: #d9d9d9; border-top: 1px solid #000; }
.r.one { height: 22px; line-height: 24px; }
.r.big { height: 78px; line-height: 18px; padding-top: 3px; }
.r.big.last { height: 77px; padding-top: 2px; }
.big p { height: 18px; }
.big .in { padding-left: 17px; }
.big .end { padding-top: 1px; }
sup { font-size: 8px; line-height: 0; font-weight: 600; }
.name { padding: 2px 0; }
.notes { padding: 5px 0 0 86.500px; line-height: 18px; }
.nt { display: grid; grid-template-columns: 56px 1fr; margin-bottom: 1px; }
.st { display: grid; grid-template-columns: 21px 1fr; padding-left: 61px; line-height: 16px; padding-bottom: 5px; }
.st p { padding-left: .5px; }
.lo { padding-top: 1px; }
.st mark { padding: 2px 0; }

.vscroll { width: 15px; background: #f0f0f0; display: flex; flex-direction: column; }
.vthumb { height: 17px; margin: 140px 0 auto; background: #cdcdcd; }
.dn { background: #dadada; }
.hscroll { height: 16px; width: 866px; display: flex; background: #f0f0f0; }
.size { width: 113px; background: #dedede; text-align: center; font-size: 11px; color: #000; line-height: 16px; letter-spacing: -.1px; }
.hthumb { width: 683px; height: 15px; background: #cdcdcd; }
.hr { margin-left: auto; }
.find { position: absolute; left: 632.500px; top: 0; width: 227px; height: 99px; padding: 4px 12px 0; background: #323232; border-radius: 0 0 4px 4px; box-shadow: 0 1px 4px rgba(0,0,0,.6); color: #fff; }
.f-top { height: 26px; display: flex; justify-content: space-between; font-size: 13px; line-height: 20px; padding-right: 3px; }
.f-top svg { margin-top: 4px; }
.f-in { height: 24px; background: #fff; color: #222; display: flex; justify-content: space-between; align-items: center; padding: 0 4px 0 5px; font-size: 13px; }
.f-btns { display: flex; gap: 8px; margin-top: 11px; }
.f-btns span { flex: 1; height: 25px; border-radius: 3px; border: 1px solid #868686; background: #a3a3a3; text-align: center; font-size: 13.500px; font-weight: 600; letter-spacing: .35px; line-height: 24px; }
.tools { width: 46px; background: #fafafa; }

.taskbar { height: 40px; display: flex; background: linear-gradient(90deg, #20343d 0, #20343d 45%, #1b2a41 75%, #1b2842 100%); color: #fff; }
.start { width: 48px; padding: 12px 16px; }
.search { width: 344px; background: #f2f2f2; border: 1px solid #b5b5b5; display: flex; align-items: center; padding-left: 11px; gap: 10px; color: #222; font-size: 14px; letter-spacing: -.1px; }
.apps { display: flex; width: 792px; }
.apps > div { width: 39px; height: 40px; padding: 8px 0 0; display: flex; justify-content: center; align-items: flex-start; flex: none; }
.apps > .wide { width: 47px; }
.apps > .b { width: 50.500px; }
.apps > .n { width: 37.950px; }
.apps > div > svg { width: 24px; height: 24px; }
.apps > .run { background: linear-gradient(#76b9ed, #76b9ed) center bottom / 29px 2px no-repeat; }
.apps > .run.m { background: linear-gradient(90deg, #76b9ed 22px, #4f83ad 22px) center bottom / 29px 2px no-repeat; }
.apps > .active { background: linear-gradient(#76b9ed, #76b9ed) center bottom / 38px 2px no-repeat, #45506a; }
.apps text { fill: #fff; text-anchor: middle; font-weight: 700; font-family: "Open Sans", sans-serif; }
.lt { font-size: 10px; }
.cfg { font-size: 8px; }
.nine { font-size: 11px; }
.apps .qc { font-weight: 400; font-size: 12px; }
.apps .qt { font-weight: 400; font-size: 13px; }
.tscroll { width: 17px; background: #f0f0f0; }
.clock { width: 68px; margin-left: -4px; display: flex; flex-direction: column; text-align: center; font-size: 12px; line-height: 18px; padding-top: 2px; letter-spacing: -.4px; }
.notif { margin-left: 5px; }
.n20 { font-size: 12px; fill: #fff; text-anchor: middle; font-weight: 600; }
.peek { width: 1px; margin-left: 5px; background: #69758a; }
```
